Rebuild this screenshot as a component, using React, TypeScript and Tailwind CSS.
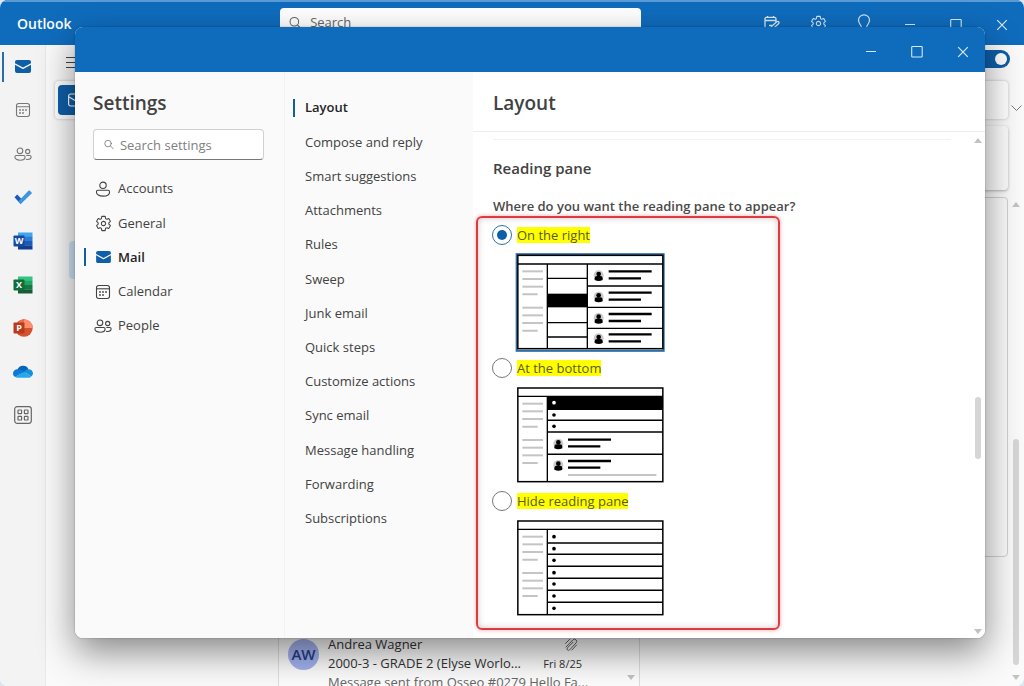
import { useState } from 'react'
import type { ReactNode } from 'react'
import { IoSettingsOutline } from 'react-icons/io5'

type PaneMode = 'right' | 'bottom' | 'hidden'

interface IconProps {
  className?: string
}

function MailIcon({ className }: IconProps) {
  return (
    <svg viewBox="0 0 16 13" className={className} fill="currentColor" aria-hidden="true">
      <path d="M0 3.2 8 7.6l8-4.4V2a2 2 0 0 0-2-2H2a2 2 0 0 0-2 2z" />
      <path d="M0 4.7V11a2 2 0 0 0 2 2h12a2 2 0 0 0 2-2V4.7L8.3 9a.7.7 0 0 1-.6 0z" />
    </svg>
  )
}

function CalendarIcon({ className }: IconProps) {
  return (
    <svg viewBox="0 0 16 16" className={className} fill="none" stroke="currentColor" strokeWidth="1.1" aria-hidden="true">
      <rect x="1.5" y="1.5" width="13" height="13" rx="2.2" />
      <path d="M1.5 4.8h13" />
      <g fill="currentColor" stroke="none">
        <circle cx="5" cy="8" r="0.9" />
        <circle cx="8" cy="8" r="0.9" />
        <circle cx="11" cy="8" r="0.9" />
        <circle cx="5" cy="11" r="0.9" />
        <circle cx="8" cy="11" r="0.9" />
      </g>
    </svg>
  )
}

function PersonIcon({ className }: IconProps) {
  return (
    <svg viewBox="0 0 16 16" className={className} fill="none" stroke="currentColor" strokeWidth="1.1" aria-hidden="true">
      <circle cx="8" cy="4.3" r="3.2" />
      <path d="M3 9.3h10c.9 0 1.6.7 1.6 1.6 0 2.6-2.8 4.2-6.6 4.2s-6.6-1.6-6.6-4.2c0-.9.7-1.6 1.6-1.6z" />
    </svg>
  )
}

function PeopleIcon({ className }: IconProps) {
  return (
    <svg viewBox="0 0 18 16" className={className} fill="none" stroke="currentColor" strokeWidth="1.1" aria-hidden="true">
      <circle cx="6" cy="4.8" r="2.8" />
      <circle cx="13.7" cy="5.5" r="2.1" />
      <path d="M2.3 9.5h7.4c.8 0 1.4.6 1.4 1.4 0 2-2 3.3-5.1 3.3S.9 12.9.9 10.9c0-.8.6-1.4 1.4-1.4z" />
      <path d="M12.3 9.5h3.5c.8 0 1.3.6 1.3 1.3 0 1.7-1.4 2.7-3.6 2.7-.6 0-1.1-.1-1.5-.2" />
    </svg>
  )
}

function SearchIcon({ className }: IconProps) {
  return (
    <svg viewBox="0 0 14 14" className={className} fill="none" stroke="currentColor" strokeWidth="1.1" strokeLinecap="round" aria-hidden="true">
      <circle cx="5.7" cy="5.7" r="4.6" />
      <path d="m9.2 9.2 4 4" />
    </svg>
  )
}

function TodoIcon() {
  return (
    <svg viewBox="0 0 18 14" className="h-3.5 w-[18px]" aria-hidden="true">
      <path d="M.5 7.3 3.2 4.6 9.3 10.7 7 13.5q-.4.4-.9 0z" fill="#195abd" />
      <path d="m4.2 11.5 10.5-10.9q.4-.4.9 0l2 2q.4.5 0 .9L7.3 13.4q-.6.5-1.2 0z" fill="#3a96e4" />
    </svg>
  )
}

function OfficeIcon({ letter }: { letter: 'W' | 'X' }) {
  const colors = letter === 'W' ? ['#41a5ee', '#2b7cd3', '#185abd', '#103f91', '#174a9f'] : ['#33c481', '#21a366', '#107c41', '#185c37', '#136b3a']
  return (
    <svg viewBox="0 0 20 18" className="h-[18px] w-5" aria-hidden="true">
      <rect x="5" y="0.5" width="14.5" height="4.5" fill={colors[0]} />
      <rect x="5" y="4.75" width="14.5" height="4.25" fill={colors[1]} />
      <rect x="5" y="9" width="14.5" height="4.25" fill={colors[2]} />
      <rect x="5" y="13.25" width="14.5" height="4.25" fill={colors[3]} />
      <rect x="0.5" y="3.5" width="11" height="11" rx="0.8" fill={colors[4]} />
      <text x="6" y="12.3" textAnchor="middle" fill="#fff" fontFamily="Open Sans, sans-serif" fontWeight="700" fontSize="9">
        {letter}
      </text>
    </svg>
  )
}

function PowerPointIcon() {
  return (
    <svg viewBox="0 0 20 18" className="h-[18px] w-5" aria-hidden="true">
      <circle cx="11" cy="9" r="8.7" fill="#d35230" />
      <path d="M11 .3A8.7 8.7 0 0 1 19.7 9H11z" fill="#ff8f6b" />
      <path d="M11 .3A8.7 8.7 0 0 0 2.3 9H11z" fill="#ed6c47" />
      <rect x="0.5" y="3.5" width="11" height="11" rx="0.8" fill="#b83b1d" />
      <text x="6" y="12.3" textAnchor="middle" fill="#fff" fontFamily="Open Sans, sans-serif" fontWeight="700" fontSize="9">
        P
      </text>
    </svg>
  )
}

function OneDriveIcon() {
  return (
    <svg viewBox="0 0 20 13" className="h-[13px] w-5" aria-hidden="true">
      <path d="M4.5 4.5A6 6 0 0 1 15.5 4.2L11 9 4 8z" fill="#0364b8" />
      <path d="M4.5 4.3C2 4.3 0 6.2 0 8.5c0 1.5.8 2.7 2 3.5l9.5-5.2C9.5 5 7 4.1 4.5 4.3z" fill="#0f78d4" />
      <path d="M15.3 4.2c-2 0-3 1-4.2 2.6l7 4.7c1.3-.8 1.9-1.9 1.9-3.2a4.2 4.2 0 0 0-4.7-4.1z" fill="#1490df" />
      <path d="m11.1 6.7-9.3 5.1c.7.6 1.7.9 2.7.9h11.2c1 0 1.9-.3 2.7-1z" fill="#28a8ea" />
    </svg>
  )
}

function AppsIcon() {
  return (
    <svg viewBox="0 0 18 18" className="size-[18px] text-[#666]" fill="none" stroke="currentColor" strokeWidth="1.2" aria-hidden="true">
      <rect x="0.7" y="0.7" width="16.6" height="16.6" rx="2.5" />
      <rect x="4" y="4" width="3.6" height="3.6" rx="0.6" />
      <rect x="10.4" y="4" width="3.6" height="3.6" rx="0.6" />
      <rect x="4" y="10.4" width="3.6" height="3.6" rx="0.6" />
      <rect x="10.4" y="10.4" width="3.6" height="3.6" rx="0.6" />
    </svg>
  )
}

function CalendarEditIcon() {
  return (
    <svg viewBox="0 0 16 14" className="h-3.5 w-4" fill="none" stroke="currentColor" strokeWidth="1.3" strokeLinejoin="round" aria-hidden="true">
      <path d="M5.5 12H2.5A1.5 1.5 0 0 1 1 10.5V2.8A1.5 1.5 0 0 1 2.5 1.3h8A1.5 1.5 0 0 1 12 2.8V6M1 4.5h11M3.5 0v1.5M9.5 0v1.5" />
      <path d="M7 12.8 7.7 10.3 12.8 5.8q1.2-.8 2 .2.6 1-.3 1.8L9.6 12.3zM5 9.5h3" />
    </svg>
  )
}

function BulbIcon() {
  return (
    <svg viewBox="0 0 14 18" className="h-[18px] w-3.5" fill="none" stroke="currentColor" strokeWidth="1.2" aria-hidden="true">
      <path d="M4.5 13.5C4.2 10.8 1.5 9.8 1.5 6.3a5.5 5.5 0 0 1 11 0c0 3.5-2.7 4.5-3 7.2zM5 13.5V16h4v-2.5" />
    </svg>
  )
}

function MinimizeIcon() {
  return (
    <svg viewBox="0 0 12 12" className="size-3" stroke="currentColor" strokeWidth="1.1" aria-hidden="true">
      <path d="M1 5.5h10" />
    </svg>
  )
}

function MaximizeIcon() {
  return (
    <svg viewBox="0 0 12 12" className="size-3" fill="none" stroke="currentColor" strokeWidth="1.1" aria-hidden="true">
      <rect x="0.7" y="0.5" width="10.5" height="10.5" rx="0.8" />
    </svg>
  )
}

function CloseIcon() {
  return (
    <svg viewBox="0 0 12 12" className="size-3" stroke="currentColor" strokeWidth="1.2" aria-hidden="true">
      <path d="m1.2 1.2 9.6 9.6M10.8 1.2 1.2 10.8" />
    </svg>
  )
}

function ScrollArrow({ down }: { down?: boolean }) {
  return (
    <svg viewBox="0 0 8 5" className="h-[5px] w-2 fill-[#bfc4c2]" aria-hidden="true">
      <path d={down ? 'M0 0h8L4 5z' : 'M0 5h8L4 0z'} />
    </svg>
  )
}

function Avatar({ x, y }: { x: number; y: number }) {
  return (
    <g>
      <circle cx={x} cy={y - 2} r="15" fill="#ccc" />
      <circle cx={x} cy={y - 6} r="7" />
      <path d={`M${x - 12} ${y + 12}v-5q0-7 7-7h10q7 0 7 7v5q-12 6-24 0z`} />
    </g>
  )
}

function PaneFrame({ top = 7, lift = 0, selected, children }: { top?: number; lift?: number; selected?: boolean; children: ReactNode }) {
  return (
    <svg viewBox="0 0 450 297" className="h-[99px] w-[150px]" aria-hidden="true">
      {selected && <rect x="5" y="3.5" width="441" height="290" fill="#fff" stroke="#2b6ea6" strokeWidth="6" />}
      <rect x="8.5" y={top} width="435" height={287 - top} fill="#fff" stroke="#000" strokeWidth="4.5" />
      <path d={`M8 ${33 - lift}h436M97 ${33 - lift}V287`} stroke="#000" strokeWidth="4" />
      <g stroke="#c4c4c4" strokeWidth="6">
        {[55, 78, 101, 164, 187, 210].map((y) => (
          <path key={y} d={`M22 ${y - lift}h62`} />
        ))}
        <path d={`M22 ${124 - lift}h46M22 ${233 - lift}h46`} />
      </g>
      {children}
    </svg>
  )
}

function PanePreview({ mode }: { mode: PaneMode }) {
  if (mode === 'right') {
    return (
      <PaneFrame selected>
        <path d="M97 76h120M97 209h120M97 252h120M217 33v254M217 99h227M217 163h227M217 226h227" stroke="#000" strokeWidth="4" />
        <rect x="97" y="122" width="120" height="41" />
        {[55, 119, 183, 244].map((y) => (
          <g key={y}>
            <Avatar x={251} y={y + 14} />
            <path d={`M281 ${y}h129M281 ${y + 21}h97`} stroke="#000" strokeWidth="7" />
          </g>
        ))}
      </PaneFrame>
    )
  }

  if (mode === 'bottom') {
    return (
      <PaneFrame top={6} lift={2}>
        <rect x="97" y="31" width="347" height="41" />
        <path d="M97 103h347M97 138h347M97 205h347" stroke="#000" strokeWidth="4.5" />
        <circle cx="117" cy="50" r="5.5" fill="#fff" />
        <circle cx="117" cy="87" r="5.5" />
        <circle cx="117" cy="121" r="5.5" />
        {[161, 225].map((y) => (
          <g key={y}>
            <Avatar x={130} y={y + 14} />
            <path d={`M159 ${y}h129M159 ${y + 20}h97`} stroke="#000" strokeWidth="7" />
          </g>
        ))}
        <path d="M159 267h265" stroke="#c4c4c4" strokeWidth="6" />
      </PaneFrame>
    )
  }

  return (
    <PaneFrame top={6} lift={2}>
      <path d="M97 72h347M97 106h347M97 142h347M97 178h347M97 214h347M97 250h347" stroke="#000" strokeWidth="4.5" />
      {[53, 89, 124, 161, 195, 231, 268].map((y) => (
        <circle key={y} cx="117" cy={y} r="5.5" />
      ))}
    </PaneFrame>
  )
}

const railApps = [
  { name: 'Mail', icon: <MailIcon className="h-[13px] w-4 text-[#0f5ea8]" /> },
  { name: 'Calendar', icon: <CalendarIcon className="size-4 text-[#777]" /> },
  { name: 'People', icon: <PeopleIcon className="h-4 w-[18px] text-[#777]" /> },
  { name: 'To Do', icon: <TodoIcon /> },
  { name: 'Word', icon: <OfficeIcon letter="W" /> },
  { name: 'Excel', icon: <OfficeIcon letter="X" /> },
  { name: 'PowerPoint', icon: <PowerPointIcon /> },
  { name: 'OneDrive', icon: <OneDriveIcon /> },
  { name: 'More apps', icon: <AppsIcon /> },
]

const categories = [
  { name: 'Accounts', icon: <PersonIcon className="size-4" /> },
  { name: 'General', icon: <IoSettingsOutline className="size-[17px]" /> },
  { name: 'Mail', icon: <MailIcon className="h-3 w-[15px] text-[#0f5ea8]" /> },
  { name: 'Calendar', icon: <CalendarIcon className="size-4" /> },
  { name: 'People', icon: <PeopleIcon className="h-4 w-[18px]" /> },
]

const mailPages = [
  'Layout',
  'Compose and reply',
  'Smart suggestions',
  'Attachments',
  'Rules',
  'Sweep',
  'Junk email',
  'Quick steps',
  'Customize actions',
  'Sync email',
  'Message handling',
  'Forwarding',
  'Subscriptions',
]

const paneOptions: { mode: PaneMode; label: string }[] = [
  { mode: 'right', label: 'On the right' },
  { mode: 'bottom', label: 'At the bottom' },
  { mode: 'hidden', label: 'Hide reading pane' },
]

function TitleButton({ label, children }: { label: string; children: ReactNode }) {
  return (
    <button type="button" aria-label={label} className="flex h-full w-[46px] items-center justify-center text-[#d6e9f8]">
      {children}
    </button>
  )
}

function MailWindow() {
  return (
    <div className="flex h-screen flex-col overflow-hidden rounded-lg bg-[#fafafa]">
      <header className="flex h-[45px] shrink-0 border-t-2 border-[#5b9bd5] bg-[#0f6cbd]">
        <h1 className="w-[280px] shrink-0 pt-3 pl-[17px] text-sm leading-5 font-semibold text-white">Outlook</h1>
        <label className="mt-1.5 flex h-[30px] w-[361px] items-center gap-2 rounded bg-white px-[9px] text-[#666]">
          <SearchIcon className="size-3.5" />
          <input type="search" aria-label="Search" placeholder="Search" className="w-full text-[13px] outline-none placeholder:text-[#666]" />
        </label>
        <div className="mr-[-1px] ml-auto flex h-[42px]">
          <TitleButton label="My day"><CalendarEditIcon /></TitleButton>
          <TitleButton label="Settings"><IoSettingsOutline className="size-[17px]" /></TitleButton>
          <TitleButton label="Tips"><BulbIcon /></TitleButton>
          <TitleButton label="Minimize"><span className="mt-1"><MinimizeIcon /></span></TitleButton>
          <TitleButton label="Maximize"><span className="mt-1"><MaximizeIcon /></span></TitleButton>
          <TitleButton label="Close"><span className="mt-1"><CloseIcon /></span></TitleButton>
        </div>
      </header>

      <div className="flex min-h-0 flex-1">
        <nav aria-label="Apps" className="w-[46px] shrink-0 border-r border-[#e8e8e8] bg-[#f3f3f3]">
          <ul className="grid h-[392px] auto-rows-fr">
            {railApps.map((app, i) => (
              <li key={app.name} className="flex items-center">
                <span className={i === 0 ? 'ml-0.5 h-[30px] w-0.5 bg-[#2b6ea6]' : 'ml-0.5 w-0.5'} />
                <button type="button" aria-label={app.name} className="flex w-[38px] justify-center">
                  {app.icon}
                </button>
              </li>
            ))}
          </ul>
        </nav>

        <main className="flex min-w-0 flex-1 flex-col pl-[9px]">
          <div className="flex h-9 shrink-0 items-start justify-between pt-[5px]">
            <button type="button" aria-label="Menu" className="mt-[7px] ml-[11px] flex w-4 flex-col gap-1">
              <span className="h-px bg-[#444]" />
              <span className="h-px bg-[#444]" />
              <span className="h-px bg-[#444]" />
            </button>
            <button type="button" role="switch" aria-checked="true" aria-label="New Outlook" className="mr-[-2px] flex h-[18px] w-9 items-center justify-end rounded-full bg-[#0f5ea8] pr-[3px]">
              <span className="size-3 rounded-full bg-white" />
            </button>
          </div>

          <div className="flex h-[38px] shrink-0 items-center rounded bg-white pl-[3px] shadow-[0_0_3px_rgba(0,0,0,0.25)]">
            <button type="button" aria-label="New mail" className="flex h-[30px] w-[110px] items-center rounded bg-[#0f5ea8] pl-2.5 text-white">
              <svg viewBox="0 0 16 14" className="h-3.5 w-4" fill="none" stroke="currentColor" strokeWidth="1.2" aria-hidden="true">
                <rect x="0.6" y="1" width="14.5" height="12" rx="2" />
                <path d="m1 4 7 4 7-4" />
              </svg>
            </button>
          </div>

          <div className="flex min-h-0 flex-1 pt-[7px]">
            <aside className="w-[223px] shrink-0 pt-[115px] pl-3.5">
              <div className="h-[38px] rounded bg-[#cfe4fa]" />
            </aside>
            <section aria-label="Messages" className="flex w-[362px] shrink-0 flex-col justify-end border-x border-[#ddd] bg-[#fcfcfc]">
              <div className="flex h-[51px]">
                <article className="flex min-w-0 flex-1 gap-[9px] pl-[9px]">
                  <span className="mt-1 flex size-[31px] shrink-0 items-center justify-center rounded-full bg-[#a3b2ee] text-[15px] font-semibold text-[#263b86]">
                    AW
                  </span>
                  <div className="w-[254px] text-[13px] leading-[19px] text-[#333]">
                    <div className="flex items-center justify-between pr-1">
                      <span>Andrea Wagner</span>
                      <svg viewBox="0 0 14 14" className="size-3.5 text-[#666]" fill="none" stroke="currentColor" strokeWidth="1" strokeLinecap="round" aria-hidden="true">
                        <path d="M1.5 5.5 6 1M2 9l7-7.2a2.2 2.2 0 0 1 3.2 3L5.5 12a1.5 1.5 0 0 1-2.2-2L9 4.2M12.5 7 8 12" />
                      </svg>
                    </div>
                    <div className="flex justify-between gap-3">
                      <span className="whitespace-nowrap">2000-3 - GRADE 2 (Elyse Worlo...</span>
                      <time className="shrink-0 text-[11px]">Fri 8/25</time>
                    </div>
                    <p className="whitespace-nowrap text-[#666]">Message sent from Osseo #0279 Hello Fa...</p>
                  </div>
                </article>
                <span className="flex w-[17px] items-end justify-center pb-1.5"><ScrollArrow down /></span>
              </div>
            </section>
            <section aria-label="Message" className="flex min-w-0 flex-1 flex-col gap-[7px]">
              <div className="h-16 shrink-0 rounded bg-[#fcfcfc] shadow-[0_1px_3px_rgba(0,0,0,0.3)]" />
              <div className="mb-[129px] flex-1 rounded border border-[#d0d0d0] bg-[#fafafa]" />
            </section>
          </div>
        </main>

        <div className="flex w-4 shrink-0 flex-col items-center pt-[60px] pb-1.5">
          <svg viewBox="0 0 11 6" className="h-1.5 w-[11px] shrink-0" fill="none" stroke="#777" aria-hidden="true">
            <path d="m.5.5 5 5 5-5" />
          </svg>
          <span className="mt-[91px]"><ScrollArrow /></span>
          <span className="grow" />
          <span className="mb-2.5 h-[226px] w-1.5 rounded-full bg-[#d6d6d6]" />
          <ScrollArrow down />
        </div>
      </div>
    </div>
  )
}

function CategoryNav() {
  return (
    <nav aria-label="Settings categories" className="w-[210px] shrink-0 border-r border-[#f3f3f3] bg-[#fafafa] pt-[19px]">
      <h2 className="pl-[18px] text-[19px] leading-6 font-semibold text-[#424242]">Settings</h2>
      <label className="mt-3.5 mr-[20px] ml-[18px] flex h-[31px] items-center gap-1.5 rounded border border-[#d1d1d1] border-b-[#777] bg-white pl-[10px] text-[#707070]">
        <SearchIcon className="size-[11px]" />
        <input type="search" aria-label="Search settings" placeholder="Search settings" className="w-full min-w-0 pt-0.5 text-[13px] outline-none placeholder:text-[#808080]" />
      </label>
      <ul className="mt-3 ml-[9px] grid h-[171px] auto-rows-fr text-[13px] text-[#424242]">
        {categories.map((item) => (
          <li key={item.name} className="flex">
            <button type="button" className="flex w-full items-center">
              <span className={item.name === 'Mail' ? 'h-[18px] w-0.5 bg-[#0f5ea8]' : 'w-0.5'} />
              <span className="ml-2 flex w-[18px] justify-center">{item.icon}</span>
              <span className={item.name === 'Mail' ? 'ml-1.5 font-semibold text-[#242424]' : 'ml-1.5'}>{item.name}</span>
            </button>
          </li>
        ))}
      </ul>
    </nav>
  )
}

function PageNav() {
  return (
    <nav aria-label="Mail settings" className="w-[188px] shrink-0 bg-[#fafafa] pt-[19px]">
      <ul className="ml-2 grid h-[445px] auto-rows-fr text-[13px] text-[#424242]">
        {mailPages.map((page, i) => (
          <li key={page} className="flex">
            <button type="button" className="flex w-full items-center gap-2.5">
              <span className={i === 0 ? 'h-[18px] w-0.5 bg-[#0f5ea8]' : 'w-0.5'} />
              <span className={i === 0 ? 'font-semibold text-[#242424]' : ''}>{page}</span>
            </button>
          </li>
        ))}
      </ul>
    </nav>
  )
}

function ReadingPaneOptions() {
  const [selected, setSelected] = useState<PaneMode>('right')

  return (
    <fieldset>
      <legend className="text-[13px] leading-5 font-semibold text-[#4a4a4a]">Where do you want the reading pane to appear?</legend>
      <div className="-ml-[17px] flex w-[304px] flex-col gap-1.5 rounded-md border-2 border-[#dc3c41] pt-[7px] pb-2.5 pl-3.5 shadow-[0_0_4px_rgba(220,60,65,0.45),inset_0_0_6px_rgba(120,60,60,0.3)]">
        {paneOptions.map((option) => (
          <div key={option.mode}>
            <label className="flex h-5 items-center gap-[5px] text-[13px] leading-4 text-[#5c5a1c]">
              <input
                type="radio"
                name="reading-pane"
                checked={selected === option.mode}
                onChange={() => setSelected(option.mode)}
                className="flex size-5 appearance-none items-center justify-center rounded-full border border-[#777] bg-white checked:border-[#2b6ea6] checked:before:size-2.5 checked:before:rounded-full checked:before:bg-[#0f5ea8]"
              />
              <span className="bg-[#ffff00]">{option.label}</span>
            </label>
            <div className="mt-2 ml-[23px]">
              <PanePreview mode={option.mode} />
            </div>
          </div>
        ))}
      </div>
    </fieldset>
  )
}

function SettingsWindow() {
  return (
    <div
      role="dialog"
      aria-label="Settings"
      className="absolute top-[27px] right-[39px] bottom-12 left-[75px] flex flex-col overflow-hidden rounded-lg bg-white shadow-[0_14px_36px_rgba(0,0,0,0.46),0_0_2px_rgba(0,0,0,0.3)]"
    >
      <div className="mr-[-1px] flex h-[45px] shrink-0 justify-end bg-[#0f6cbd] pt-1">
        <TitleButton label="Minimize"><MinimizeIcon /></TitleButton>
        <TitleButton label="Maximize"><MaximizeIcon /></TitleButton>
        <TitleButton label="Close"><CloseIcon /></TitleButton>
      </div>
      <div className="flex min-h-0 flex-1">
        <CategoryNav />
        <PageNav />
        <section className="flex min-w-0 flex-1 flex-col bg-white">
          <h2 className="border-b border-[#ececec] pt-[19px] pb-4 pl-5 text-[19px] leading-6 font-semibold text-[#424242]">Layout</h2>
          <div className="flex min-h-0 flex-1">
            <div className="min-w-0 flex-1 overflow-hidden pt-[7px] pl-5">
              <hr className="mr-[19px] border-[#f3f3f3]" />
              <h3 className="mt-[18px] mb-[18px] text-[15px] leading-5 font-semibold text-[#424242]">Reading pane</h3>
              <ReadingPaneOptions />
            </div>
            <div className="flex w-[15px] shrink-0 flex-col items-center pt-1.5 pb-1">
              <ScrollArrow />
              <span className="grow-[3]" />
              <span className="h-[62px] w-1.5 rounded-full bg-[#d6d6d6]" />
              <span className="grow-[2]" />
              <ScrollArrow down />
            </div>
          </div>
        </section>
      </div>
    </div>
  )
}

export default function App() {
  return (
    <div className="relative h-screen overflow-hidden bg-[#dde6ee] font-['Open_Sans','Noto_Sans',sans-serif]">
      <MailWindow />
      <SettingsWindow />
    </div>
  )
}
